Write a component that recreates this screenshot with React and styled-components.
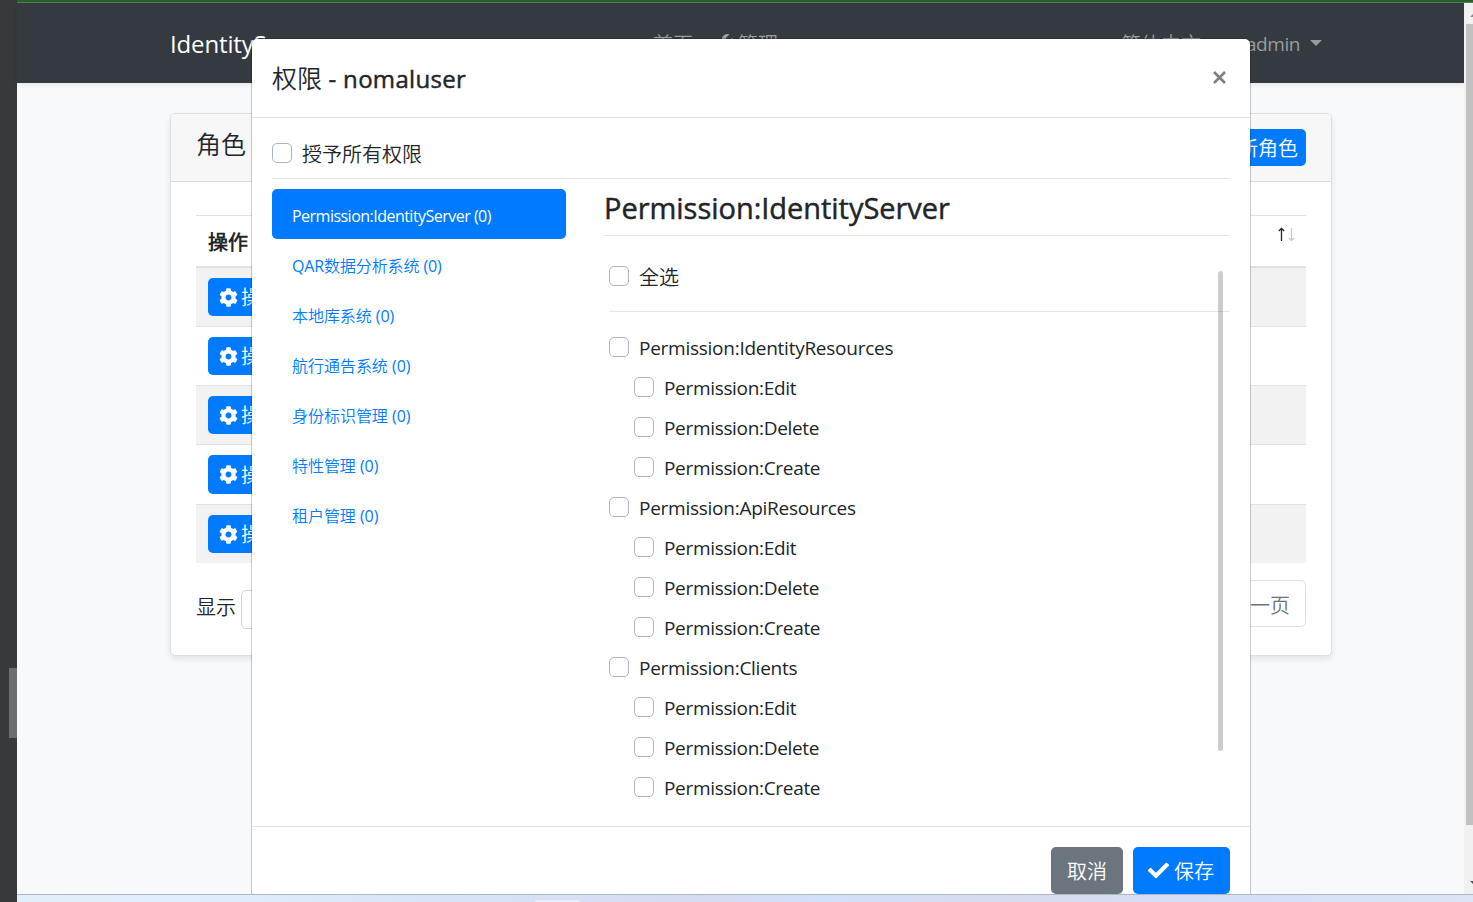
import React from "react";
import styled, { createGlobalStyle, css } from "styled-components";
import { FaCog, FaCheck, FaWrench } from "react-icons/fa";

const Global = createGlobalStyle`
  * { box-sizing: border-box; }
  html, body { margin: 0; padding: 0; }
  body {
    width: 1473px; height: 902px; overflow: hidden;
    font-family: "Open Sans", "Noto Sans CJK SC DemiLight", "Noto Sans CJK SC Light", "Noto Sans CJK SC", sans-serif;
    font-size: 20px; line-height: 30px; color: #212529; background: #f8f9fa;
  }
`;

const Txt = styled.span`
  display: inline-block;
  white-space: pre;
  letter-spacing: ${(p) => p.$ls || 0}px;
  padding-top: ${(p) => p.$drop || 0}px;
  ${(p) => p.$size && css`font-size: ${p.$size}px;`}
  ${(p) => p.$medium && css`-webkit-text-stroke: 0.45px currentColor;`}
`;

const Screen = styled.div`
  position: relative;
  display: flex;
  width: 1473px;
  height: 902px;
  overflow: hidden;
`;

const Rail = styled.aside`
  width: 17px;
  flex: none;
  background: #373a3d;
  display: flex;
  justify-content: flex-end;
  padding-top: 668px;
`;

const RailThumb = styled.div`
  width: 8px;
  height: 70px;
  background: #6b6e72;
`;

const Main = styled.div`
  flex: 1;
  display: flex;
  flex-direction: column;
  min-width: 0;
`;

const TopLine = styled.div`
  height: 3px;
  flex: none;
  background: #275e2b;
  border-bottom: 1px solid #538157;
`;

const Viewport = styled.div`
  display: flex;
  height: 891px;
`;

const Page = styled.div`
  flex: 1;
  min-width: 0;
  background: #f8f9fb;
`;

const Navbar = styled.nav`
  height: 80px;
  padding: 2px 0 0 153px;
  display: flex;
  align-items: center;
  background: #353a40;
  color: #9a9c9f;
  box-shadow: 0 2px 5px rgba(0, 0, 0, 0.08);
`;

const Brand = styled.span`
  width: 483px;
  flex: none;
  color: #fff;
  font-size: 24px;
  letter-spacing: -0.15px;
`;

const NavItem = styled.span`
  display: flex;
  align-items: center;
  flex: none;
  width: ${(p) => p.$w}px;
  height: 30px;
  gap: 5px;
  white-space: nowrap;
`;

const Caret = styled.i`
  border: 6px solid transparent;
  border-top-color: #9a9c9f;
  border-bottom: 0;
  margin: 0 0 3px ${(p) => p.$ml || 0}px;
`;

const Card = styled.section`
  width: 1162px;
  height: 543px;
  margin: 30px 0 0 153px;
  border: 1px solid #dfdfdf;
  border-radius: 5px;
  background: #fff;
  box-shadow: 0 3px 6px rgba(0, 0, 0, 0.09);
`;

const CardHeader = styled.header`
  height: 68px;
  display: flex;
  justify-content: space-between;
  align-items: flex-start;
  padding: 15px 25px 0;
  background: #f7f7f7;
  border-bottom: 1px solid #dcdcdc;
  border-radius: 4px 4px 0 0;
`;

const CardTitle = styled.h2`
  margin: 0;
  font-size: 25px;
  line-height: 30px;
  font-weight: 400;
`;

const Button = styled.button`
  display: inline-flex;
  align-items: center;
  border: 0;
  border-radius: 5px;
  font: inherit;
  color: #fff;
  white-space: nowrap;
  background: ${(p) => (p.$muted ? "#6c757d" : "#007bff")};
  height: ${(p) => p.$h}px;
  width: ${(p) => (p.$w ? p.$w + "px" : "auto")};
  padding: ${(p) => p.$pad || "0 8px"};
  gap: ${(p) => p.$gap || 5}px;
  font-size: 20px;
`;

const Grid = styled.div`
  margin: 33px 25px 0;
  border-top: 1px solid #dee2e6;
`;

const GridHead = styled.div`
  display: flex;
  justify-content: space-between;
  align-items: flex-start;
  height: 52px;
  padding: 11px 10px 0 12px;
  border-bottom: 2px solid #dee2e6;
  font-weight: 700;
`;

const GridRow = styled.div`
  height: ${(p) => p.$h}px;
  padding: 10px 12px;
  display: flex;
  border-top: ${(p) => (p.$first ? 0 : 1)}px solid #dee2e6;
  background: ${(p) => (p.$odd ? "#f2f2f2" : "#fff")};
`;

const GridFooter = styled.div`
  display: flex;
  justify-content: space-between;
  align-items: flex-start;
  padding: 17px 25px 0;
`;

const PageSize = styled.label`
  display: flex;
  align-items: flex-start;
  gap: 5px;
  padding-top: 10px;
  line-height: 36px;
`;

const SizeSelect = styled.span`
  width: 80px;
  height: 39px;
  border: 1px solid #ced4da;
  border-radius: 5px;
`;

const PageLink = styled.span`
  height: 47px;
  padding: 10px 15px 0;
  border: 1px solid #dee2e6;
  border-radius: 0 5px 5px 0;
  color: #6c757d;
`;

const ScrollTrack = styled.div`
  width: 9px;
  flex: none;
  background: #f1f1f1;
  padding: 21px 0 0 2px;
`;

const ScrollThumb = styled.div`
  height: 801px;
  background: #c1c1c1;
`;

const ScrollArrow = styled.svg`
  position: absolute;
  right: 0;
  top: ${(p) => p.$top}px;
`;

const Taskbar = styled.footer`
  height: 8px;
  border-top: 1px solid #adb6c2;
  background: linear-gradient(90deg, #e2eef9 0, #dfecfa 240px, #d8e3f8 430px, #d5dcf2 700px, #d3e0f9 800px, #d7dcef 1000px, #d4dff8 1200px, #dbe5f6 100%);
  padding: 5px 0 0 518px;
`;

const TaskTab = styled.div`
  width: 44px;
  height: 3px;
  border-radius: 3px 3px 0 0;
  background: #eaf0fb;
`;

const Modal = styled.div`
  position: absolute;
  left: 251px;
  top: 38px;
  width: 1000px;
  height: 856px;
  border: 1px solid rgba(0, 0, 0, 0.2);
  border-bottom: 0;
  border-radius: 6px 6px 0 0;
  background: #fff;
  background-clip: padding-box;
  display: flex;
  flex-direction: column;
`;

const ModalHeader = styled.header`
  height: 79px;
  flex: none;
  display: flex;
  justify-content: space-between;
  padding: 20px 24px 0 20px;
  border-bottom: 1px solid #dee2e6;
`;

const ModalTitle = styled.h5`
  margin: 0;
  font-size: 25px;
  line-height: 38px;
  font-weight: 400;
  white-space: pre;
`;

const CloseIcon = styled.svg`
  margin-top: 12px;
`;

const ModalBody = styled.div`
  height: 708px;
  flex: none;
  padding: 0 20px;
`;

const GrantAll = styled.div`
  height: 61px;
  padding-top: 16px;
  border-bottom: 1px solid #e5e5e5;
`;

const Check = styled.label`
  display: flex;
  align-items: center;
  height: 40px;
  gap: 10px;
  margin-left: ${(p) => p.$indent || 0}px;
`;

const Box = styled.span`
  width: 20px;
  height: 20px;
  border: 1px solid #adb5bd;
  border-radius: 5px;
  background: #fff;
  margin-bottom: 3px;
`;

const Columns = styled.div`
  display: flex;
  padding-top: 10px;
`;

const Tabs = styled.div`
  width: 294px;
  margin-right: 38px;
`;

const Tab = styled.div`
  height: 50px;
  padding: 4px 20px 0;
  display: flex;
  align-items: center;
  border-radius: 5px;
  font-size: 16px;
  color: ${(p) => (p.$active ? "#fff" : "#007bff")};
  background: ${(p) => (p.$active ? "#007bff" : "transparent")};
  white-space: nowrap;
`;

const Panel = styled.div`
  position: relative;
  flex: 1;
`;

const PanelTitle = styled.h4`
  margin: 0;
  height: 47px;
  font-size: 29px;
  line-height: 38px;
  font-weight: 400;
  border-bottom: 1px solid #e5e5e5;
`;

const SelectAll = styled.div`
  margin-left: 5px;
  height: 76px;
  padding-top: 21px;
  border-bottom: 1px solid #e5e5e5;
`;

const PermissionList = styled.div`
  padding: 16px 0 0 5px;
`;

const PanelThumb = styled.div`
  position: absolute;
  right: 7px;
  top: 82px;
  width: 5px;
  height: 480px;
  border-radius: 3px;
  background: rgba(0, 0, 0, 0.2);
`;

const ModalFooter = styled.footer`
  display: flex;
  justify-content: flex-end;
  gap: 10px;
  padding: 20px 20px 0;
  border-top: 1px solid #dee2e6;
`;

const tabs = [
  ["Permission:IdentityServer (0)", -0.52],
  ["QAR数据分析系统 (0)", -0.12],
  ["本地库系统 (0)", -0.05],
  ["航行通告系统 (0)", -0.03],
  ["身份标识管理 (0)", -0.03],
  ["特性管理 (0)", -0.05],
  ["租户管理 (0)", -0.05],
];

const groups = ["IdentityResources", "ApiResources", "Clients"];
const actions = ["Edit", "Delete", "Create"];
const rowHeights = [58, 59, 59, 60, 59];

const Permission = ({ name, indent }) => (
  <Check $indent={indent}>
    <Box />
    <Txt $size={19} $ls={indent ? -0.32 : -0.26}>Permission:{name}</Txt>
  </Check>
);

export default function App() {
  return (
    <Screen>
      <Global />
      <Rail><RailThumb /></Rail>
      <Main>
        <TopLine />
        <Viewport>
          <Page>
            <Navbar>
              <Brand>IdentityServer</Brand>
              <NavItem $w={60}><Txt $drop={2}>首页</Txt></NavItem>
              <NavItem $w={408}><FaWrench size={20} /><Txt $drop={2}>管理</Txt><Caret /></NavItem>
              <NavItem $w={125}><Txt $drop={2}>简体中文</Txt><Caret $ml={4} /></NavItem>
              <NavItem $w={80}><Txt $size={19} $ls={-0.45}>admin</Txt><Caret $ml={5} /></NavItem>
            </Navbar>
            <Card>
              <CardHeader>
                <CardTitle>角色</CardTitle>
                <Button $h={37}><Txt $drop={3}>新角色</Txt></Button>
              </CardHeader>
              <Grid>
                <GridHead>
                  <Txt $drop={1}>操作</Txt>
                  <svg width="20" height="16" viewBox="0 0 20 16" fill="none">
                    <path d="M5.5 14V1.5M2.8 4L5.5 1.3l2.7 2.7" stroke="#212529" strokeWidth="1.3" />
                    <path d="M15.5 1V13.5M12.8 11l2.7 2.5 2.7-2.5" stroke="#c8c9ca" strokeWidth="1.2" />
                  </svg>
                </GridHead>
                {rowHeights.map((h, i) => (
                  <GridRow key={i} $h={h} $first={i === 0} $odd={i % 2 === 0}>
                    <Button $h={i === 3 ? 39 : 38} $pad="0 11px" $gap={3}>
                      <FaCog size={19} />
                      <Txt $drop={2}>操作</Txt>
                    </Button>
                  </GridRow>
                ))}
              </Grid>
              <GridFooter>
                <PageSize>显示<SizeSelect /></PageSize>
                <PageLink>下一页</PageLink>
              </GridFooter>
            </Card>
          </Page>
          <ScrollTrack><ScrollThumb /></ScrollTrack>
        </Viewport>
        <Taskbar><TaskTab /></Taskbar>
      </Main>
      <ScrollArrow $top={14} width="3" height="3"><path d="M0 3L3 0V3Z" fill="#8b8b8b" /></ScrollArrow>
      <ScrollArrow $top={881} width="3" height="3"><path d="M0 0H3V3Z" fill="#505050" /></ScrollArrow>
      <Modal>
        <ModalHeader>
          <ModalTitle>权限<Txt $size={24} $ls={0.3} $medium> - nomaluser</Txt></ModalTitle>
          <CloseIcon width="13" height="13" viewBox="0 0 13 13">
            <path d="M1 1L12 12M12 1L1 12" stroke="#7f7f7f" strokeWidth="2.6" />
          </CloseIcon>
        </ModalHeader>
        <ModalBody>
          <GrantAll><Check><Box /><Txt $drop={1}>授予所有权限</Txt></Check></GrantAll>
          <Columns>
            <Tabs>
              {tabs.map(([label, ls], i) => (
                <Tab key={label} $active={i === 0}><Txt $ls={ls}>{label}</Txt></Tab>
              ))}
            </Tabs>
            <Panel>
              <PanelTitle><Txt $ls={-0.03} $medium>Permission:IdentityServer</Txt></PanelTitle>
              <SelectAll><Check><Box /><Txt $drop={2}>全选</Txt></Check></SelectAll>
              <PermissionList>
                {groups.map((group) => (
                  <React.Fragment key={group}>
                    <Permission name={group} />
                    {actions.map((a) => <Permission key={a} name={a} indent={25} />)}
                  </React.Fragment>
                ))}
              </PermissionList>
              <PanelThumb />
            </Panel>
          </Columns>
        </ModalBody>
        <ModalFooter>
          <Button $muted $h={47} $w={72} $pad="0 16px"><Txt $drop={2}>取消</Txt></Button>
          <Button $h={47} $w={97} $pad="0 15px"><FaCheck size={21} /><Txt $drop={2}>保存</Txt></Button>
        </ModalFooter>
      </Modal>
    </Screen>
  );
}
